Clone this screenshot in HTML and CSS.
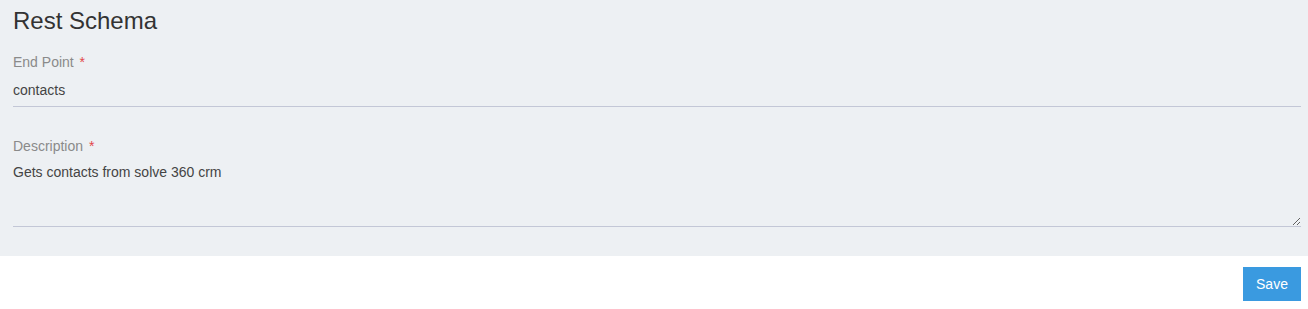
FILE: index.html
```html
<!DOCTYPE html>
<html>
<head>
<meta charset="utf-8">
<link rel="stylesheet" href="styles.css">
</head>
<body>
<div class="panel">
  <h2 class="title">Rest Schema</h2>
  <div class="field">
    <label class="label">End Point <span class="req">*</span></label>
    <input class="input" type="text" value="contacts">
  </div>
  <div class="field field-desc">
    <label class="label">Description <span class="req">*</span></label>
    <textarea class="textarea">Gets contacts from solve 360 crm</textarea>
  </div>
</div>
<div class="actions">
  <button class="btn">Save</button>
</div>
</body>
</html>
```
FILE: styles.css
```css
html, body {
  margin: 0;
  padding: 0;
  background: #ffffff;
  font-family: "Liberation Sans", Arial, sans-serif;
}
.panel {
  background: #edf0f3;
  padding: 7px 7px 29px 13px;
  height: 256px;
  box-sizing: border-box;
}
.title {
  margin: 0;
  font-size: 24px;
  font-weight: normal;
  line-height: 27px;
  color: #333333;
}
.field {
  display: flex;
  flex-direction: column;
}
.label {
  margin-top: 20px;
  font-size: 14px;
  line-height: 16px;
  color: #8a8a8a;
}
.req {
  color: #e2474a;
  margin-left: 2px;
}
.input {
  margin-top: 12px;
  display: block;
  height: 25px;
  box-sizing: border-box;
  padding: 0 0 8px 0;
  border: none;
  border-bottom: 1px solid #c3c7d6;
  background: transparent;
  font-family: "Liberation Sans", Arial, sans-serif;
  font-size: 14px;
  line-height: 16px;
  color: #444444;
  outline: none;
  width: 100%;
}
.field-desc .label {
  margin-top: 31px;
}
.textarea {
  margin-top: 10px;
  display: block;
  height: 63px;
  box-sizing: border-box;
  padding: 0;
  border: none;
  border-bottom: 1px solid #c3c7d6;
  background: transparent;
  font-family: "Liberation Sans", Arial, sans-serif;
  font-size: 14px;
  line-height: 16px;
  color: #444444;
  outline: none;
  width: 100%;
  resize: vertical;
}
.actions {
  display: flex;
  justify-content: flex-end;
  padding: 11px 7px 0 0;
}
.btn {
  width: 58px;
  height: 34px;
  border: none;
  border-radius: 0;
  background: #3a9ae0;
  color: #ffffff;
  font-family: "Liberation Sans", Arial, sans-serif;
  font-size: 14px;
  padding: 0;
}
```
